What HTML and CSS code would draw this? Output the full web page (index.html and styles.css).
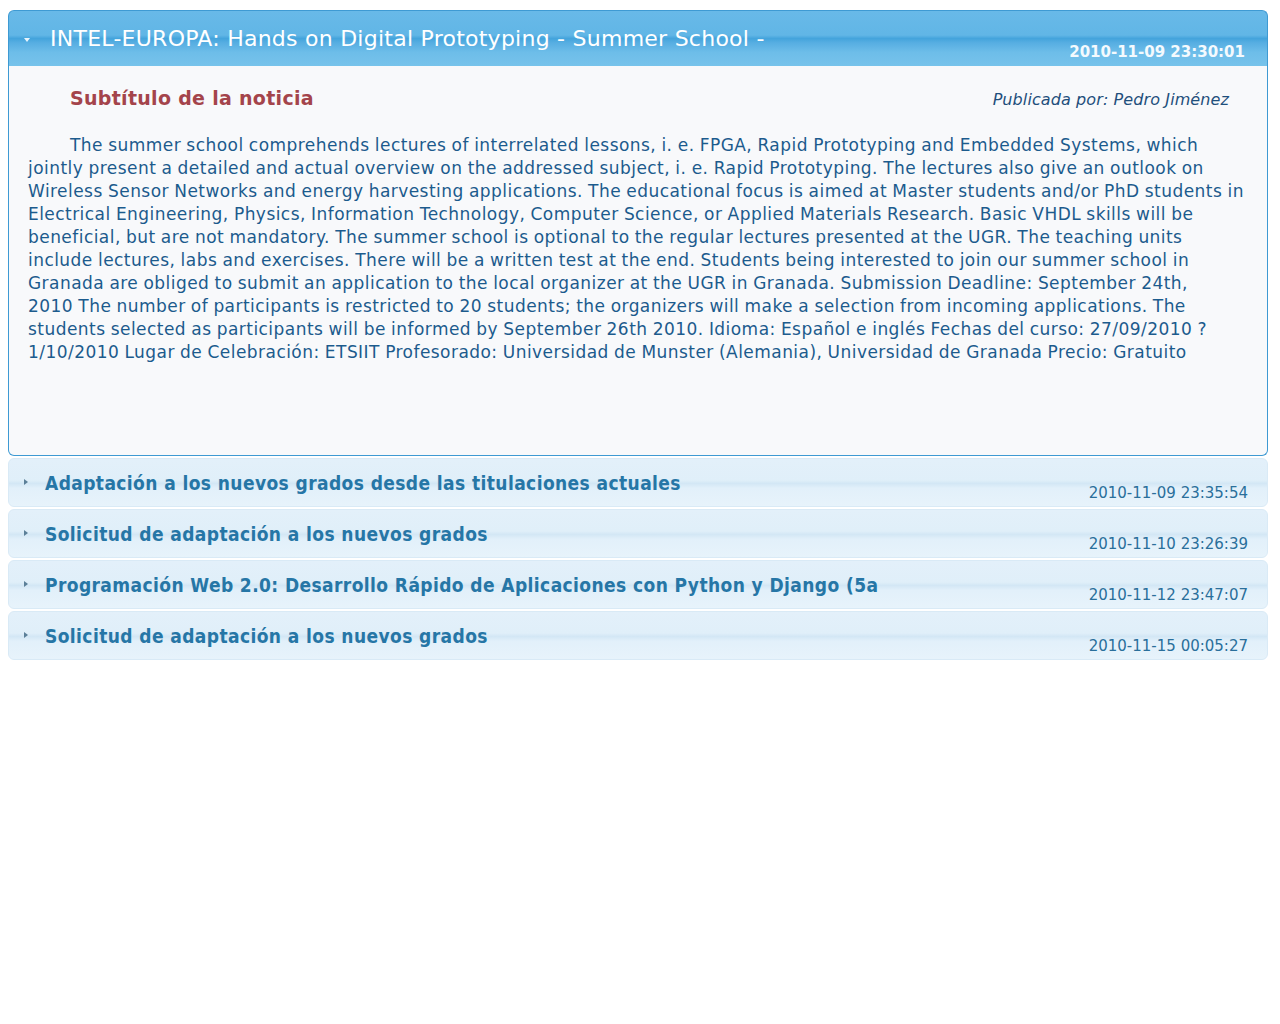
FILE: index.html
```html
<!DOCTYPE html>
<html lang="es">
<head>
<meta charset="utf-8">
<title>Noticias</title>
<link rel="stylesheet" href="styles.css">
</head>
<body>
<div class="accordion">
  <div class="item open">
    <div class="head">
      <span class="tri down"></span>
      <span class="title">INTEL-EUROPA: Hands on Digital Prototyping - Summer School -</span>
      <span class="date">2010-11-09 23:30:01</span>
    </div>
    <div class="panel">
      <div class="meta">
        <span class="subtitle">Subtítulo de la noticia</span>
        <span class="author">Publicada por: Pedro Jiménez</span>
      </div>
      <p class="text">The summer school comprehends lectures of interrelated lessons, i. e. FPGA, Rapid Prototyping and Embedded Systems, which jointly present a detailed and actual overview on the addressed subject, i. e. Rapid Prototyping. The lectures also give an outlook on Wireless Sensor Networks and energy harvesting applications. The educational focus is aimed at Master students and/or PhD students in Electrical Engineering, Physics, Information Technology, Computer Science, or Applied Materials Research. Basic VHDL skills will be beneficial, but are not mandatory. The summer school is optional to the regular lectures presented at the UGR. The teaching units include lectures, labs and exercises. There will be a written test at the end. Students being interested to join our summer school in Granada are obliged to submit an application to the local organizer at the UGR in Granada. Submission Deadline: September 24th, 2010&nbsp;The number of participants is restricted to 20 students; the organizers will make a selection from incoming applications. The students selected as participants will be informed by September 26th 2010. Idioma: Español e inglés Fechas del curso: 27/09/2010 ? 1/10/2010 Lugar de Celebración: ETSIIT Profesorado: Universidad de Munster (Alemania), Universidad de Granada Precio: Gratuito</p>
    </div>
  </div>
  <div class="item">
    <div class="head">
      <span class="tri right"></span>
      <span class="title">Adaptación a los nuevos grados desde las titulaciones actuales</span>
      <span class="date">2010-11-09 23:35:54</span>
    </div>
  </div>
  <div class="item">
    <div class="head">
      <span class="tri right"></span>
      <span class="title">Solicitud de adaptación a los nuevos grados</span>
      <span class="date">2010-11-10 23:26:39</span>
    </div>
  </div>
  <div class="item">
    <div class="head">
      <span class="tri right"></span>
      <span class="title">Programación Web 2.0: Desarrollo Rápido de Aplicaciones con Python y Django (5a</span>
      <span class="date">2010-11-12 23:47:07</span>
    </div>
  </div>
  <div class="item">
    <div class="head">
      <span class="tri right"></span>
      <span class="title">Solicitud de adaptación a los nuevos grados</span>
      <span class="date">2010-11-15 00:05:27</span>
    </div>
  </div>
</div>
</body>
</html>
```
FILE: styles.css
```css
body {
  margin: 8px 12px 8px 8px;
  background: #ffffff;
  font-family: "DejaVu Sans", sans-serif;
}
.accordion {
  margin-top: 2px;
  display: flex;
  flex-direction: column;
  gap: 2px;
}
.head {
  position: relative;
  display: flex;
  align-items: center;
  height: 47px;
  border: 1px solid #d9eaf6;
  border-radius: 6px;
  background: linear-gradient(#e3f0fa 0%, #e0eff9 45%, #d3e7f5 52%, #e2f0fa 62%, #e7f3fb 100%);
  padding-left: 15px;
}
.item.open .head {
  height: 55px;
  border: 1px solid #3e9ad3;
  border-bottom: none;
  border-radius: 6px 6px 0 0;
  background: linear-gradient(#68b9e8 0%, #61b6e6 44%, #44a4dc 50%, #57aee2 58%, #6dbde9 75%, #77c3eb 100%);
}
.tri {
  width: 0;
  height: 0;
  margin-right: 17px;
}
.tri.right {
  border-top: 3.5px solid transparent;
  border-bottom: 3.5px solid transparent;
  border-left: 4px solid #5b7f98;
  margin-top: -1px;
}
.tri.down {
  border-left: 3.5px solid transparent;
  border-right: 3.5px solid transparent;
  border-top: 4px solid #eaf5fc;
  margin-right: 20px;
  margin-top: 2px;
}
.title {
  font-family: "DejaVu Sans Condensed", "DejaVu Sans", sans-serif;
  font-size: 19px;
  font-weight: bold;
  color: #2676a6;
  letter-spacing: 0.4px;
}
.item.open .title {
  font-family: "DejaVu Sans", sans-serif;
  font-size: 22px;
  font-weight: normal;
  color: #ffffff;
  letter-spacing: 0.25px;
}
.date {
  position: absolute;
  right: 19px;
  bottom: 4px;
  font-size: 15px;
  color: #2a6f9b;
}
.item.open .date {
  font-weight: bold;
  color: #f4fafe;
  right: 22px;
  bottom: 5px;
}
.panel {
  height: 390px;
  border: 1px solid #3e9ad3;
  border-top: none;
  border-radius: 0 0 6px 6px;
  background: #f8f9fb;
  padding: 0 19px;
  box-sizing: border-box;
}
.meta {
  display: flex;
  justify-content: space-between;
  align-items: baseline;
  padding: 21px 19px 0 42px;
}
.subtitle {
  font-size: 19px;
  font-weight: bold;
  color: #a4444b;
  letter-spacing: 0.3px;
}
.author {
  font-size: 16px;
  font-style: italic;
  color: #1f4f7c;
  letter-spacing: 0.1px;
}
.text {
  margin: 25px 0 0 0;
  font-size: 17px;
  line-height: 23px;
  color: #1c5b8d;
  text-indent: 42px;
  letter-spacing: 0.45px;
  word-spacing: -0.6px;
}
```
